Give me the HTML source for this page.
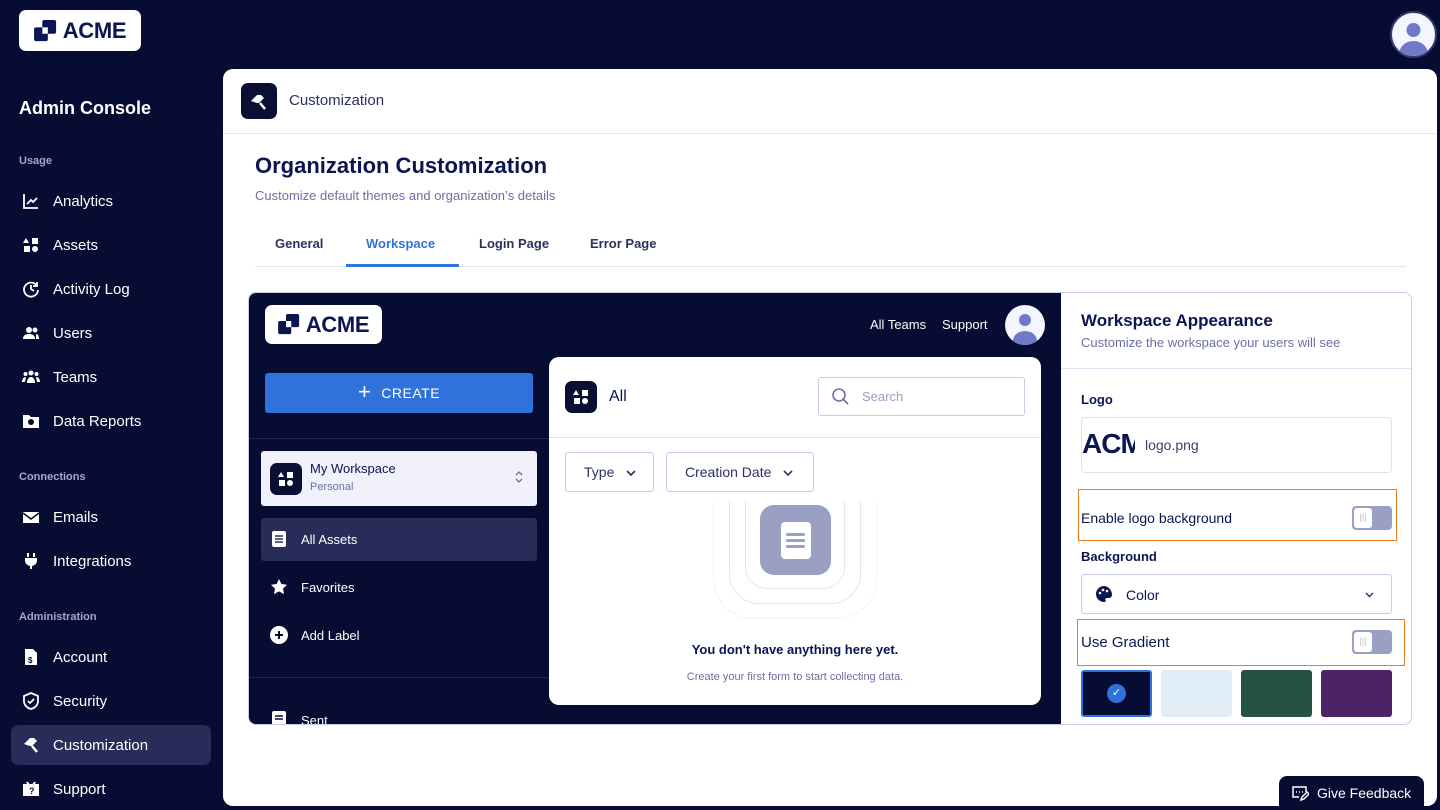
<!DOCTYPE html>
<html><head><meta charset="utf-8"><style>
*{box-sizing:border-box;margin:0;padding:0}
body{width:1440px;height:810px;overflow:hidden;background:#070c33;font-family:"Liberation Sans",sans-serif;position:relative;color:#0a1551}
.a{position:absolute}
.logo{background:#fff;border-radius:7px;display:flex;align-items:center;justify-content:center;gap:5px;font-weight:bold;color:#0a1551;letter-spacing:-0.3px}
.nav{position:absolute;left:0;width:220px;height:40px;display:flex;align-items:center;color:#fff;font-size:15px}
.nav svg{position:absolute;left:22px;width:18px;height:18px}
.nav span{position:absolute;left:53px}
.sec{position:absolute;left:19px;font-size:11px;font-weight:bold;color:#a3a7cc}
.tab{position:absolute;top:236px;font-size:13px;font-weight:bold;color:#2c3260}
.sw{position:absolute;top:670px;width:71px;height:47px;border-radius:3px}
.chev{display:inline-block;vertical-align:middle;margin-left:12px}
</style></head><body>
<div class="a logo" style="left:19px;top:10px;width:122px;height:41px;font-size:22px">
<svg width="24" height="22" viewBox="0 0 26 24"><rect x="9" y="0" width="15" height="15" rx="2" fill="#0a1551"/><rect x="0" y="8" width="15" height="15" rx="2" fill="#0a1551"/><rect x="9" y="8" width="6" height="7" fill="#fff"/></svg>ACME</div>
<div class="a" style="left:1390px;top:11px;width:47px;height:47px;border-radius:50%;background:#f3f5ff;border:2px solid #343a6a;overflow:hidden">
<svg width="43" height="43" viewBox="0 0 43 43"><circle cx="21.5" cy="17" r="7" fill="#7078c8"/><ellipse cx="21.5" cy="40" rx="14" ry="12" fill="#7078c8"/></svg></div>
<div class="a" style="left:19px;top:98px;color:#fff;font-size:18px;font-weight:bold">Admin Console</div>
<div class="sec" style="top:155px">Usage</div>
<div class="nav" style="top:181px"><svg viewBox="0 0 18 18" fill="none" stroke="#fff" stroke-width="1.8"><path d="M2 2v14h14M5 12l4-4 2 2 4-4"/></svg><span>Analytics</span></div>
<div class="nav" style="top:225px"><svg viewBox="0 0 18 18" fill="#fff"><path d="M4 2l3 5H1z"/><rect x="10" y="2" width="6" height="6"/><rect x="2" y="10" width="6" height="6"/><circle cx="13" cy="13" r="3"/></svg><span>Assets</span></div>
<div class="nav" style="top:269px"><svg viewBox="0 0 18 18" fill="none" stroke="#fff" stroke-width="1.8"><path d="M15 6a7 7 0 1 0 1 4M15 2v4h-4M9 5v4l3 2"/></svg><span>Activity Log</span></div>
<div class="nav" style="top:313px"><svg viewBox="0 0 18 18" fill="#fff"><circle cx="7" cy="6" r="3"/><path d="M1 15c0-4 3-5 6-5s6 1 6 5z"/><circle cx="13" cy="6" r="2.5"/><path d="M14 10c2 0 3 2 3 5h-3z"/></svg><span>Users</span></div>
<div class="nav" style="top:357px"><svg viewBox="0 0 18 18" fill="#fff"><circle cx="9" cy="5" r="2.5"/><circle cx="3.5" cy="6" r="2"/><circle cx="14.5" cy="6" r="2"/><path d="M5 15c0-4 2-6 4-6s4 2 4 6zM0 14c0-3 1.5-5 4-5l-1 5zM18 14c0-3-1.5-5-4-5l1 5z"/></svg><span>Teams</span></div>
<div class="nav" style="top:401px"><svg viewBox="0 0 18 18" fill="#fff"><path d="M1 3h6l2 2h8v11H1z"/><circle cx="9" cy="10" r="3" fill="#070c33"/></svg><span>Data Reports</span></div>
<div class="sec" style="top:471px">Connections</div>
<div class="nav" style="top:497px"><svg viewBox="0 0 18 18" fill="#fff"><path d="M1 4h16v11H1z"/><path d="M1 5l8 6 8-6" stroke="#070c33" stroke-width="1.6" fill="none"/></svg><span>Emails</span></div>
<div class="nav" style="top:541px"><svg viewBox="0 0 18 18" fill="#fff"><rect x="5" y="1" width="2" height="4"/><rect x="11" y="1" width="2" height="4"/><path d="M3 6h12v3a6 6 0 0 1-5 5v3H8v-3a6 6 0 0 1-5-5z"/></svg><span>Integrations</span></div>
<div class="sec" style="top:611px">Administration</div>
<div class="nav" style="top:637px"><svg viewBox="0 0 18 18" fill="#fff"><path d="M3 1h8l4 4v12H3z"/><text x="6" y="15" font-size="8" fill="#070c33" font-weight="bold">$</text></svg><span>Account</span></div>
<div class="nav" style="top:681px"><svg viewBox="0 0 18 18" fill="none" stroke="#fff" stroke-width="1.8"><path d="M9 1l7 3v5c0 4-3 7-7 8-4-1-7-4-7-8V4z"/><path d="M6 9l2 2 4-4"/></svg><span>Security</span></div>
<div class="a" style="left:11px;top:725px;width:200px;height:40px;border-radius:7px;background:#272c58"></div>
<div class="nav" style="top:725px"><svg viewBox="0 0 18 18" fill="#fff"><path d="M2 8l6-6 4 0 3 3-5 5-2 0z"/><path d="M10 10l5 6" stroke="#fff" stroke-width="2.5"/></svg><span>Customization</span></div>
<div class="nav" style="top:769px"><svg viewBox="0 0 18 18" fill="#fff"><path d="M1 4h16v12H1z"/><path d="M5 2l2 3M13 2l-2 3" stroke="#fff" stroke-width="2"/><text x="7" y="14" font-size="9" fill="#070c33" font-weight="bold">?</text></svg><span>Support</span></div>

<div class="a" style="left:223px;top:69px;width:1214px;height:737px;background:#fff;border-radius:10px"></div>
<div class="a" style="left:223px;top:133px;width:1214px;height:1px;background:#e4e6f5"></div>
<div class="a" style="left:241px;top:83px;width:36px;height:36px;border-radius:7px;background:#0a1033"><svg width="36" height="36" viewBox="0 0 36 36"><path d="M10 18l6-6 4 0 3 3-5 5-2 0z" fill="#fff"/><path d="M19 20l5 6" stroke="#fff" stroke-width="2.5"/></svg></div>
<div class="a" style="left:289px;top:92px;font-size:15px;color:#2c3260">Customization</div>
<div class="a" style="left:255px;top:153px;font-size:22px;font-weight:bold">Organization Customization</div>
<div class="a" style="left:255px;top:188px;font-size:13px;color:#6b6fa5">Customize default themes and organization’s details</div>
<div class="tab" style="left:275px">General</div>
<div class="tab" style="left:366px;color:#2f72dc">Workspace</div>
<div class="tab" style="left:479px">Login Page</div>
<div class="tab" style="left:590px">Error Page</div>
<div class="a" style="left:255px;top:266px;width:1151px;height:1px;background:#e0e2ef"></div>
<div class="a" style="left:346px;top:264px;width:113px;height:3px;background:#2f72dc"></div>

<div class="a" style="left:248px;top:292px;width:1164px;height:433px;border:1px solid #c8cbe8;border-radius:8px;background:#fff;overflow:hidden">
 <div class="a" style="left:0;top:0;width:812px;height:433px;background:#070c33"></div>
 <div class="a logo" style="left:16px;top:12px;width:117px;height:39px;font-size:22px"><svg width="23" height="21" viewBox="0 0 26 24"><rect x="9" y="0" width="15" height="15" rx="2" fill="#0a1551"/><rect x="0" y="8" width="15" height="15" rx="2" fill="#0a1551"/><rect x="9" y="8" width="6" height="7" fill="#fff"/></svg>ACME</div>
 <div class="a" style="left:621px;top:24px;color:#fff;font-size:13px">All Teams</div>
 <div class="a" style="left:693px;top:24px;color:#fff;font-size:13px">Support</div>
 <div class="a" style="left:756px;top:12px;width:40px;height:40px;border-radius:50%;background:#f3f5ff;overflow:hidden"><svg width="40" height="40"><circle cx="20" cy="15" r="6" fill="#7078c8"/><ellipse cx="20" cy="36" rx="12" ry="10" fill="#7078c8"/></svg></div>
 <div class="a" style="left:16px;top:80px;width:268px;height:40px;border-radius:3px;background:#2f72dc;color:#fff;font-size:14px;display:flex;align-items:center;justify-content:center;gap:10px;letter-spacing:.5px"><span style="font-size:22px;margin-top:-3px">+</span>CREATE</div>
 <div class="a" style="left:0;top:145px;width:300px;height:1px;background:#1d2250"></div>
 <div class="a" style="left:12px;top:158px;width:276px;height:55px;border-radius:3px;background:#f0f1fa"></div>
 <div class="a" style="left:21px;top:170px;width:32px;height:32px;border-radius:7px;background:#0a1033"><svg width="32" height="32" viewBox="0 0 32 32" fill="#fff"><path d="M11 9l3 5H8z"/><rect x="17" y="9" width="6" height="6"/><rect x="9" y="17" width="6" height="6"/><circle cx="20" cy="20" r="3"/></svg></div>
 <div class="a" style="left:61px;top:168px;font-size:13px;color:#0a1551">My Workspace</div>
 <div class="a" style="left:61px;top:188px;font-size:11px;color:#6b6fa5">Personal</div>
 <svg class="a" style="left:265px;top:177px" width="10" height="14" viewBox="0 0 10 14" fill="none" stroke="#6b6fa5" stroke-width="1.3"><path d="M2 5l3-3 3 3M2 9l3 3 3-3"/></svg>
 <div class="a" style="left:12px;top:225px;width:276px;height:43px;border-radius:3px;background:#272c58"></div>
 <svg class="a" style="left:22px;top:237px" width="16" height="18" viewBox="0 0 16 18"><rect x="1" y="1" width="14" height="16" rx="2" fill="#fff"/><path d="M4 6h8M4 9h8M4 12h8" stroke="#272c58" stroke-width="1.5"/></svg>
 <div class="a" style="left:52px;top:239px;color:#fff;font-size:13px">All Assets</div>
 <svg class="a" style="left:21px;top:285px" width="18" height="18" viewBox="0 0 18 18"><path d="M9 1l2.4 5 5.6.7-4 3.9 1 5.5L9 13.4 4 16.1l1-5.5-4-3.9 5.6-.7z" fill="#fff"/></svg>
 <div class="a" style="left:52px;top:287px;color:#fff;font-size:13px">Favorites</div>
 <svg class="a" style="left:21px;top:333px" width="18" height="18" viewBox="0 0 18 18"><circle cx="9" cy="9" r="9" fill="#fff"/><path d="M9 5v8M5 9h8" stroke="#070c33" stroke-width="2"/></svg>
 <div class="a" style="left:52px;top:335px;color:#fff;font-size:13px">Add Label</div>
 <div class="a" style="left:0;top:384px;width:300px;height:1px;background:#1d2250"></div>
 <svg class="a" style="left:22px;top:417px" width="16" height="18" viewBox="0 0 16 18"><rect x="1" y="1" width="14" height="16" rx="2" fill="#fff"/><path d="M4 6h8M4 9h8" stroke="#070c33" stroke-width="1.5"/></svg>
 <div class="a" style="left:52px;top:420px;color:#fff;font-size:13px">Sent</div>
 <div class="a" style="left:300px;top:64px;width:492px;height:348px;background:#fff;border-radius:10px"></div>
 <div class="a" style="left:300px;top:144px;width:492px;height:1px;background:#dfe1f2"></div>
 <div class="a" style="left:316px;top:88px;width:32px;height:32px;border-radius:7px;background:#0a1033"><svg width="32" height="32" viewBox="0 0 32 32" fill="#fff"><path d="M11 9l3 5H8z"/><rect x="17" y="9" width="6" height="6"/><rect x="9" y="17" width="6" height="6"/><circle cx="20" cy="20" r="3"/></svg></div>
 <div class="a" style="left:360px;top:95px;font-size:16px;color:#0a1551">All</div>
 <div class="a" style="left:569px;top:84px;width:207px;height:39px;border:1px solid #c8cbe8;border-radius:3px"></div>
 <svg class="a" style="left:582px;top:94px" width="18" height="18" viewBox="0 0 18 18" fill="none" stroke="#6b6fa5" stroke-width="1.6"><circle cx="8" cy="8" r="6"/><path d="M12.5 12.5L17 17"/></svg>
 <div class="a" style="left:613px;top:96px;font-size:13px;color:#9a9ec4">Search</div>
 <div class="a" style="left:316px;top:159px;width:89px;height:40px;border:1px solid #c8cbe8;border-radius:3px;font-size:14px;color:#2c3260;padding:11px 0 0 18px">Type<svg class="chev" width="10" height="7" viewBox="0 0 10 7" fill="none" stroke="#2c3260" stroke-width="1.6"><path d="M1 1l4 4 4-4"/></svg></div>
 <div class="a" style="left:417px;top:159px;width:148px;height:40px;border:1px solid #c8cbe8;border-radius:3px;font-size:14px;color:#2c3260;padding:11px 0 0 18px">Creation Date<svg class="chev" width="10" height="7" viewBox="0 0 10 7" fill="none" stroke="#2c3260" stroke-width="1.6"><path d="M1 1l4 4 4-4"/></svg></div>
 <div class="a" style="left:464px;top:208px;width:164px;height:118px;border:1px solid #f2f3fa;border-top:none;border-radius:0 0 40px 40px"></div>
 <div class="a" style="left:480px;top:208px;width:132px;height:103px;border:1px solid #e4e6f5;border-top:none;border-radius:0 0 30px 30px"></div>
 <div class="a" style="left:496px;top:208px;width:100px;height:88px;border:1px solid #e4e6f5;border-top:none;border-radius:0 0 22px 22px"></div>
 <div class="a" style="left:511px;top:212px;width:71px;height:70px;border-radius:14px;background:#9a9fc4"></div>
 <div class="a" style="left:532px;top:229px;width:30px;height:37px;border-radius:4px;background:#fff"></div>
 <div class="a" style="left:537px;top:240px;width:19px;height:3px;border-radius:2px;background:#9a9fc4;box-shadow:0 6px 0 #9a9fc4,0 12px 0 #9a9fc4"></div>
 <div class="a" style="left:300px;top:349px;width:492px;text-align:center;font-size:13px;font-weight:bold;color:#0a1551">You don't have anything here yet.</div>
 <div class="a" style="left:300px;top:378px;width:492px;text-align:center;font-size:11px;color:#6b6fa5">Create your first form to start collecting data.</div>
 <div class="a" style="left:832px;top:18px;font-size:17px;font-weight:bold;color:#0a1551">Workspace Appearance</div>
 <div class="a" style="left:832px;top:42px;font-size:13px;color:#6b6fa5">Customize the workspace your users will see</div>
 <div class="a" style="left:812px;top:75px;width:352px;height:1px;background:#e0e2f2"></div>
 <div class="a" style="left:832px;top:99px;font-size:13px;font-weight:bold">Logo</div>
 <div class="a" style="left:832px;top:124px;width:311px;height:56px;border:1px solid #e0e2f2;border-radius:4px;overflow:hidden"><div class="a" style="left:0;top:10px;width:53px;overflow:hidden;font-size:28px;font-weight:bold;white-space:nowrap;letter-spacing:-1px">ACME</div><div class="a" style="left:63px;top:19px;font-size:14px;color:#3a3f6c">logo.png</div></div>
 <div class="a" style="left:829px;top:196px;width:319px;height:52px;border:1px solid #f27a1a"></div>
 <div class="a" style="left:832px;top:217px;font-size:14px">Enable logo background</div>
 <div class="a" style="left:1103px;top:213px;width:40px;height:24px;border-radius:4px;background:#9a9fc4"><div class="a" style="left:2px;top:2px;width:18px;height:20px;border-radius:3px;background:#fff;color:#bbb;font-size:9px;text-align:center;padding-top:4px">|||</div></div>
 <div class="a" style="left:832px;top:256px;font-size:13px;font-weight:bold">Background</div>
 <div class="a" style="left:832px;top:281px;width:311px;height:40px;border:1px solid #c8cbe8;border-radius:3px"></div>
 <svg class="a" style="left:846px;top:292px" width="18" height="18" viewBox="0 0 18 18"><path d="M9 1a8 8 0 0 0 0 16c1.5 0 2-1 1.5-2s0-2 1.5-2h2a3 3 0 0 0 3-3c0-5-4-9-8-9z" fill="#0a1551"/><circle cx="5" cy="8" r="1.3" fill="#fff"/><circle cx="8" cy="5" r="1.3" fill="#fff"/><circle cx="12" cy="6" r="1.3" fill="#fff"/></svg>
 <div class="a" style="left:877px;top:294px;font-size:14px">Color</div>
 <svg class="a" style="left:1116px;top:299px" width="9" height="6" viewBox="0 0 9 6" fill="none" stroke="#2c3260" stroke-width="1.4"><path d="M1 1l3.5 3.5L8 1"/></svg>
 <div class="a" style="left:828px;top:326px;width:328px;height:47px;border:1px solid #f27a1a"></div>
 <div class="a" style="left:832px;top:341px;font-size:15px">Use Gradient</div>
 <div class="a" style="left:1103px;top:337px;width:40px;height:24px;border-radius:4px;background:#9a9fc4"><div class="a" style="left:2px;top:2px;width:18px;height:20px;border-radius:3px;background:#fff;color:#bbb;font-size:9px;text-align:center;padding-top:4px">|||</div></div>
</div>
<div class="sw" style="left:1081px;background:#070c33;border:2px solid #2f72dc"><div class="a" style="left:24px;top:12px;width:19px;height:19px;border-radius:50%;background:#2f72dc;color:#fff;font-size:11px;text-align:center;line-height:19px">✓</div></div>
<div class="sw" style="left:1161px;background:#e1eef8"></div>
<div class="sw" style="left:1241px;background:#245345"></div>
<div class="sw" style="left:1321px;background:#4c2366"></div>

<div class="a" style="left:1279px;top:776px;width:145px;height:34px;background:#070c33;border-radius:8px 8px 0 0;color:#fff;font-size:14px;display:flex;align-items:center;padding-left:12px;gap:8px">
<svg width="18" height="16" viewBox="0 0 18 16" fill="none" stroke="#fff" stroke-width="1.5"><path d="M8 12H2V2h13v5"/><path d="M5 7h1M8 7h1M11 7h1"/><path d="M10 15l1-3 5-5 2 2-5 5z"/></svg>Give Feedback</div>
</body></html>
